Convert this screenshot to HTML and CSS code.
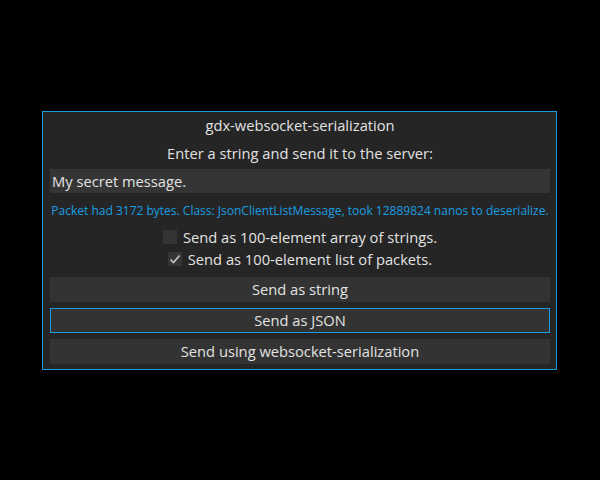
FILE: index.html
```
<!DOCTYPE html>
<html>
<head>
<meta charset="utf-8">
<link rel="stylesheet" href="styles.css">
</head>
<body>
<div class="stage">
  <div class="window">
    <div class="title">gdx-websocket-serialization</div>
    <div class="label">Enter a string and send it to the server:</div>
    <div class="field">My secret message.</div>
    <div class="status">Packet had 3172 bytes. Class: JsonClientListMessage, took 12889824 nanos to deserialize.</div>
    <div class="check-row"><span class="box"></span><span>Send as 100-element array of strings.</span></div>
    <div class="check-row second"><span class="box checked"><svg width="14" height="14" viewBox="0 0 14 14"><path d="M2.5 7.5 L5.5 10.5 L11.5 3.5" fill="none" stroke="#c8c8c8" stroke-width="1.6"/></svg></span><span>Send as 100-element list of packets.</span></div>
    <div class="buttons">
      <div class="btn">Send as string</div>
      <div class="btn focus">Send as JSON</div>
      <div class="btn">Send using websocket-serialization</div>
    </div>
  </div>
</div>
</body>
</html>
```
FILE: styles.css
```
html, body {
  margin: 0;
  padding: 0;
  background: #000;
}
.stage {
  width: 600px;
  height: 480px;
  box-sizing: border-box;
  padding: 111px 0 0 42px;
  display: flex;
  align-items: flex-start;
  justify-content: flex-start;
  font-family: "Open Sans", sans-serif;
  color: #e2e2e2;
  font-size: 14.7px;
}
.window {
  width: 500px;
  border: 1px solid #1a9de0;
  background: #252525;
  padding: 0 6px 5px 7px;
  display: flex;
  flex-direction: column;
}
.title {
  height: 28px;
  line-height: 27px;
  text-align: center;
}
.label {
  height: 27px;
  line-height: 27px;
  text-align: center;
  margin-bottom: 2px;
}
.field {
  height: 24px;
  line-height: 24px;
  background: #353535;
  padding-left: 2px;
}
.status {
  height: 36px;
  line-height: 36px;
  font-size: 12px;
  color: #1a9de0;
  text-align: center;
  white-space: nowrap;
}
.check-row {
  height: 16px;
  line-height: 16px;
  display: flex;
  justify-content: center;
  align-items: center;
  gap: 6px;
}
.check-row.second {
  margin-top: 6px;
}
.box {
  width: 14px;
  height: 14px;
  background: #353535;
  display: flex;
}
.buttons {
  margin-top: 10px;
  display: flex;
  flex-direction: column;
  gap: 6px;
}
.btn {
  height: 25px;
  line-height: 25px;
  background: #333333;
  text-align: center;
  box-sizing: border-box;
}
.btn.focus {
  border: 1px solid #1a9de0;
  line-height: 23px;
}
```
